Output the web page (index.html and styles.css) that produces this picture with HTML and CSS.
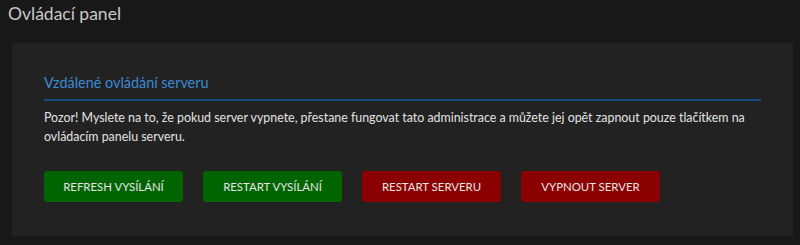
FILE: index.html
```html
<!DOCTYPE html>
<html lang="cs">
<head>
    <meta charset="UTF-8">
    <meta name="viewport" content="width=device-width, initial-scale=1.0">
    <title>Ovládací panel</title>
    <link rel="stylesheet" href="styles.css">
</head>
<body>
    <h1 class="page-title">Ovládací panel</h1>

    <div class="panel">
        <h2 class="panel-title">Vzdálené ovládání serveru</h2>
        <p class="warning">Pozor! Myslete na to, že pokud server vypnete, přestane fungovat tato administrace a můžete jej opět zapnout pouze tlačítkem na ovládacím panelu serveru.</p>

        <div class="actions">
            <button class="btn btn-green">Refresh vysílání</button>
            <button class="btn btn-green">Restart vysílání</button>
            <button class="btn btn-red">Restart serveru</button>
            <button class="btn btn-red">Vypnout server</button>
        </div>
    </div>
</body>
</html>
```

FILE: styles.css
```css
* {
    box-sizing: border-box;
    font-family: 'Lato', 'Open Sans', sans-serif;
}

body {
    margin: 0;
    padding: 0 7px 8px 12px;
    background-color: #181818;
    color: #ddd;
}

.page-title {
    margin: 0 0 0 -4px;
    padding-top: 2px;
    font-size: 17.5px;
    font-weight: normal;
    line-height: 24px;
    color: #c8c8c8;
}

.panel {
    margin-top: 17px;
    padding: 30px 32px 34px;
    background-color: #222;
}

.panel-title {
    margin: 0;
    padding-bottom: 6px;
    font-size: 14.4px;
    font-weight: normal;
    line-height: 20px;
    color: #3a8ad6;
    border-bottom: 2px solid #174b82;
}

.warning {
    margin: 7px 0 0;
    font-size: 12.4px;
    line-height: 19px;
    color: #e2e2e2;
}

.actions {
    display: flex;
    gap: 20px;
    margin-top: 25px;
}

.btn {
    width: 139px;
    height: 31px;
    padding: 0;
    border: none;
    border-radius: 3px;
    font-size: 11.4px;
    text-transform: uppercase;
    color: #e6e6e6;
    cursor: pointer;
}

.btn-green {
    background-color: #006400;
}

.btn-red {
    background-color: #8b0000;
}
```
